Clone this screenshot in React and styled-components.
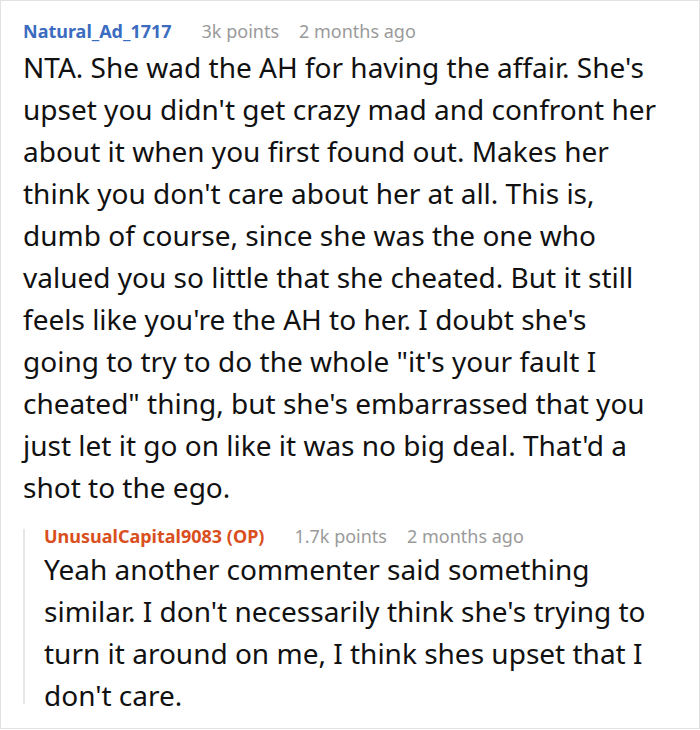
import React from "react";
import styled, { createGlobalStyle } from "styled-components";

const GlobalStyle = createGlobalStyle`
  body {
    margin: 0;
    background: #fff;
    font-family: "Noto Sans", "Open Sans", sans-serif;
  }
`;

const comment = {
  author: "Natural_Ad_1717",
  points: "3k points",
  time: "2 months ago",
  text:
    "NTA. She wad the AH for having the affair. She's upset you didn't get crazy mad and confront her about it when you first found out. Makes her think you don't care about her at all. This is, dumb of course, since she was the one who valued you so little that she cheated. But it still feels like you're the AH to her. I doubt she's going to try to do the whole \"it's your fault I cheated\" thing, but she's embarrassed that you just let it go on like it was no big deal. That'd a shot to the ego.",
  reply: {
    author: "UnusualCapital9083 (OP)",
    points: "1.7k points",
    time: "2 months ago",
    text:
      "Yeah another commenter said something similar. I don't necessarily think she's trying to turn it around on me, I think shes upset that I don't care.",
  },
};

function App() {
  return (
    <>
      <GlobalStyle />
      <Card>
        <Meta $space={2}>
          <Author>{comment.author}</Author>
          <Info>{comment.points}</Info>
          <Info>{comment.time}</Info>
        </Meta>
        <Body>{comment.text}</Body>
        <Reply>
          <Meta $space={-1}>
            <Author $op>{comment.reply.author}</Author>
            <Info>{comment.reply.points}</Info>
            <Info>{comment.reply.time}</Info>
          </Meta>
          <Body>{comment.reply.text}</Body>
        </Reply>
      </Card>
    </>
  );
}

const Card = styled.section`
  width: 700px;
  height: 729px;
  box-sizing: border-box;
  border: 1px solid #e2e2e2;
  padding: 17px 31.5px 0 22px;
`;
const Meta = styled.div`
  display: flex;
  align-items: baseline;
  gap: 20px;
  font-size: 18px;
  line-height: 26px;
  margin-bottom: ${(p) => p.$space}px;
`;
const Author = styled.span`
  font-weight: 700;
  color: ${(p) => (p.$op ? "#d94f1e" : "#3b6cbf")};
  margin-right: 10px;
`;
const Info = styled.span`
  color: #9a9a9a;
`;
const Body = styled.p`
  margin: 0;
  font-size: 28px;
  line-height: 42px;
  color: #111;
`;
const Reply = styled.div`
  position: relative;
  margin-top: 15px;
  padding-left: 21px;

  &::before {
    content: "";
    position: absolute;
    left: 0;
    top: 6px;
    bottom: 12px;
    width: 2px;
    background: #e6e6e6;
  }
`;

export default App;
